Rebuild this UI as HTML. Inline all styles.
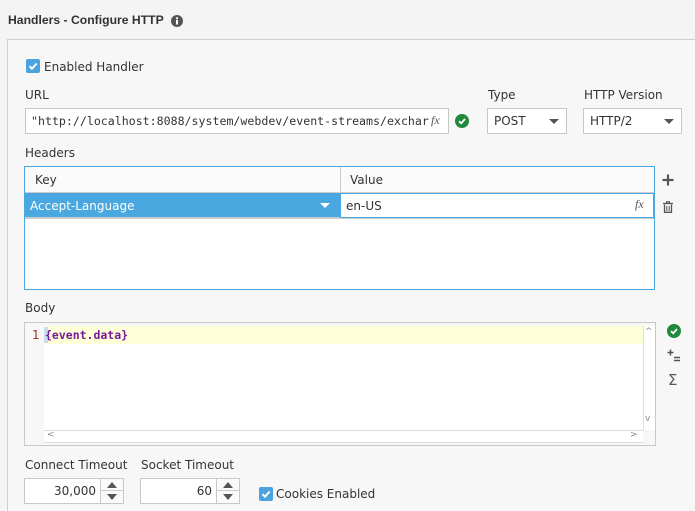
<!DOCTYPE html>
<html><head><style>
*{box-sizing:border-box;margin:0;padding:0}
html,body{width:695px;height:511px;overflow:hidden}
body{background:#f4f4f4;font-family:"DejaVu Sans","Liberation Sans",sans-serif;font-size:12px;color:#333;position:relative}
.a{position:absolute;white-space:nowrap}
.box{position:absolute;background:#fff;border:1px solid #c8c8c8}
.lbl{position:absolute;font-size:12px;color:#333;line-height:14px}
.cb{position:absolute;width:14px;height:14px;background:#4aa3df;border-radius:2px}
.cb svg{position:absolute;left:1px;top:1px}
.tri{position:absolute;width:0;height:0;border-left:5px solid transparent;border-right:5px solid transparent;border-top:5px solid #555}
.fx{position:absolute;font-family:"Liberation Serif",serif;font-style:italic;font-size:12px;color:#555}
.spb{position:absolute;left:100px;width:24px;height:26px;border:1px solid #c8c8c8;background:#fafafa}
</style></head><body>
<div class="a" style="left:8px;top:13px;font-family:'Liberation Sans',sans-serif;font-weight:bold;font-size:12.2px;color:#333">Handlers - Configure HTTP</div>
<svg class="a" style="left:171px;top:15px" width="12" height="12"><circle cx="6" cy="6" r="6" fill="#555"/><rect x="5" y="5" width="2" height="4.5" fill="#fff"/><circle cx="6" cy="3.2" r="1.1" fill="#fff"/></svg>
<div class="a" style="left:7px;top:39px;width:700px;height:490px;border:1px solid #cfcfcf;background:#f7f7f7"></div>

<div class="cb" style="left:26px;top:59px"><svg width="12" height="12"><path d="M2.5 6.2L5 8.7L9.7 3.5" stroke="#fff" stroke-width="2" fill="none"/></svg></div>
<div class="lbl" style="left:44px;top:60px">Enabled Handler</div>

<div class="lbl" style="left:25px;top:88px">URL</div>
<div class="box" style="left:25px;top:108px;width:424px;height:26px;overflow:hidden"><div class="a" style="left:5px;top:5px;font-family:'DejaVu Sans Mono','Liberation Mono',monospace;font-size:11.6px">"http://localhost:8088/system/webdev/event-streams/exchar</div><div class="a" style="left:403px;top:3px;width:20px;height:20px;background:#fff"></div><div class="fx" style="left:405px;top:4px">fx</div></div>
<svg class="a" style="left:455px;top:114px" width="14" height="14"><circle cx="7" cy="7" r="7" fill="#1e8a3a"/><path d="M4 7.2L6.2 9.3L10 5" stroke="#fff" stroke-width="1.8" fill="none"/></svg>

<div class="lbl" style="left:488px;top:88px">Type</div>
<div class="box" style="left:487px;top:108px;width:80px;height:26px"><div class="a" style="left:6px;top:5px">POST</div><div class="tri" style="left:61px;top:10px"></div></div>
<div class="lbl" style="left:584px;top:88px">HTTP Version</div>
<div class="box" style="left:583px;top:108px;width:99px;height:26px"><div class="a" style="left:6px;top:5px">HTTP/2</div><div class="tri" style="left:80px;top:10px"></div></div>

<div class="lbl" style="left:25px;top:146px">Headers</div>
<div class="a" style="left:24px;top:166px;width:631px;height:124px;border:1px solid #4aa8e0;background:#fff"></div>
<div class="a" style="left:25px;top:167px;width:629px;height:26px;background:#fafafa;border-bottom:1px solid #ccc"></div>
<div class="a" style="left:340px;top:167px;width:1px;height:26px;background:#ccc"></div>
<div class="lbl" style="left:35px;top:173px">Key</div>
<div class="lbl" style="left:350px;top:173px">Value</div>
<div class="a" style="left:25px;top:193px;width:315px;height:25px;background:#4aa8e0;border-bottom:1px solid #ccc"></div>
<div class="lbl" style="left:30px;top:199px;color:#fff">Accept-Language</div>
<div class="tri" style="left:320px;top:203px;border-top-color:#fff"></div>
<div class="a" style="left:340px;top:193px;width:314px;height:25px;background:#fff;border:1px solid #4aa8e0"></div>
<div class="lbl" style="left:346px;top:199px">en-US</div>
<div class="fx" style="left:635px;top:197px">fx</div>
<div class="a" style="left:25px;top:218px;width:629px;height:1px;background:#ccc"></div>
<svg class="a" style="left:662px;top:174px" width="12" height="12"><path d="M6 0.5V11.5M0.5 6H11.5" stroke="#555" stroke-width="2.2"/></svg>
<svg class="a" style="left:663px;top:201px" width="10" height="12"><path d="M0 2.5H10M3.5 2.5V0.8H6.5V2.5" stroke="#555" stroke-width="1.2" fill="none"/><path d="M1.5 3.5V11.3H8.5V3.5" stroke="#555" stroke-width="1.3" fill="none"/><path d="M3.8 5V10M6.2 5V10" stroke="#555" stroke-width="1"/></svg>

<div class="lbl" style="left:25px;top:301px">Body</div>
<div class="a" style="left:24px;top:322px;width:632px;height:124px;border:1px solid #c8c8c8;background:#f7f7f7"></div>
<div class="a" style="left:44px;top:326px;width:611px;height:104px;background:#fff"></div>
<div class="a" style="left:44px;top:326px;width:599px;height:18px;background:#fefed8"></div>
<div class="a" style="left:44px;top:327px;width:4px;height:16px;background:#c8dcec"></div>
<div class="a" style="left:32px;top:328px;color:#a33;font-size:12px">1</div>
<div class="a" style="left:45px;top:328px;font-family:'DejaVu Sans Mono',monospace;font-size:11.5px;font-weight:bold;color:#7a1a9a">{event.data}</div>
<div class="a" style="left:643px;top:326px;width:12px;height:104px;background:#fff;border-left:1px solid #e0e0e0"></div>
<div class="a" style="left:645px;top:327px;font-size:9px;color:#888">^</div>
<div class="a" style="left:645px;top:414px;font-size:9px;color:#888">v</div>
<div class="a" style="left:44px;top:430px;width:599px;height:13px;background:#fff;border-top:1px solid #ddd;border-bottom:1px solid #ddd"></div>
<div class="a" style="left:47px;top:430px;font-size:9px;color:#888">&lt;</div>
<div class="a" style="left:630px;top:430px;font-size:9px;color:#888">&gt;</div>
<svg class="a" style="left:667px;top:324px" width="14" height="14"><circle cx="7" cy="7" r="7" fill="#1e8a3a"/><path d="M4 7.2L6.2 9.3L10 5" stroke="#fff" stroke-width="1.8" fill="none"/></svg>
<svg class="a" style="left:667px;top:349px" width="14" height="13"><path d="M3.5 0.5V6.5M0.5 3.5H6.5" stroke="#555" stroke-width="1.5"/><path d="M7 8.5H13M7 11.5H13" stroke="#555" stroke-width="1.5"/></svg>
<div class="a" style="left:668px;top:371px;font-size:15px;color:#556">Σ</div>

<div class="lbl" style="left:25px;top:458px">Connect Timeout</div>
<div class="lbl" style="left:141px;top:458px">Socket Timeout</div>

<div class="a" style="left:24px;top:478px;width:100px;height:26px">
 <div class="box" style="left:0;top:0;width:77px;height:26px"><div class="a" style="right:4px;top:5px">30,000</div></div>
 <div class="spb" style="left:76px"><div class="a" style="left:0;top:11px;width:22px;height:1px;background:#ccc"></div><div class="a" style="left:6px;top:3px;border-left:5px solid transparent;border-right:5px solid transparent;border-bottom:6px solid #555"></div><div class="a" style="left:6px;top:15px;border-left:5px solid transparent;border-right:5px solid transparent;border-top:6px solid #555"></div></div>
</div>
<div class="a" style="left:140px;top:478px;width:100px;height:26px">
 <div class="box" style="left:0;top:0;width:77px;height:26px"><div class="a" style="right:4px;top:5px">60</div></div>
 <div class="spb" style="left:76px"><div class="a" style="left:0;top:11px;width:22px;height:1px;background:#ccc"></div><div class="a" style="left:6px;top:3px;border-left:5px solid transparent;border-right:5px solid transparent;border-bottom:6px solid #555"></div><div class="a" style="left:6px;top:15px;border-left:5px solid transparent;border-right:5px solid transparent;border-top:6px solid #555"></div></div>
</div>
<div class="cb" style="left:259px;top:487px"><svg width="12" height="12"><path d="M2.5 6.2L5 8.7L9.7 3.5" stroke="#fff" stroke-width="2" fill="none"/></svg></div>
<div class="lbl" style="left:276px;top:487px">Cookies Enabled</div>
</body></html>
